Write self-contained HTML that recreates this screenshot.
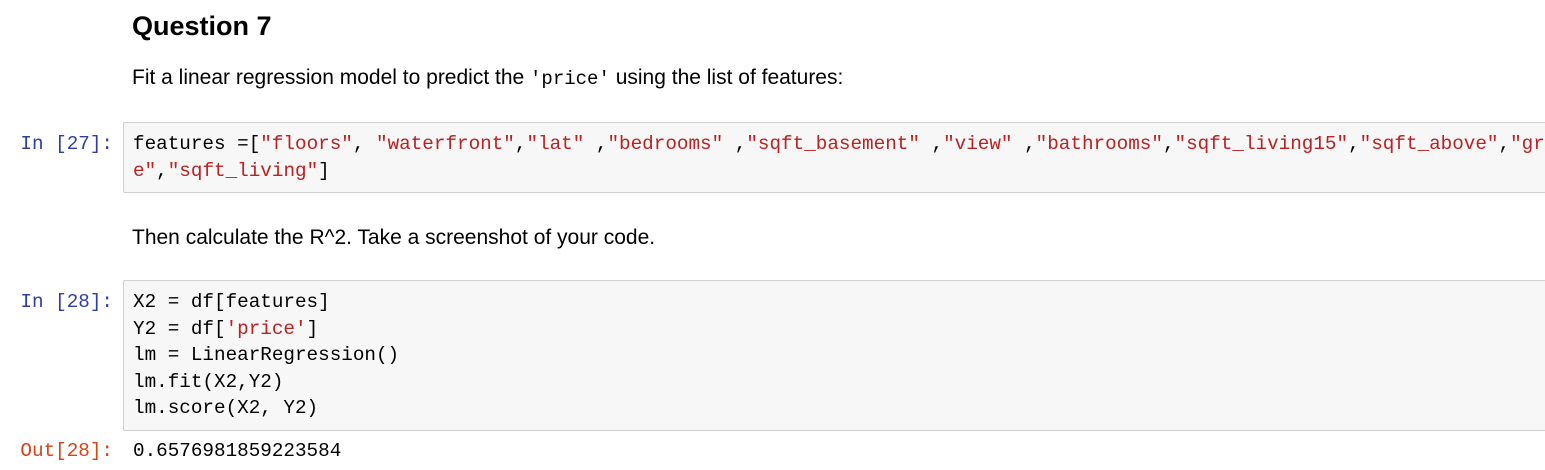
<!DOCTYPE html>
<html><head><style>
body{margin:0;width:1545px;height:470px;background:#fff;overflow:hidden;position:relative;font-family:"Liberation Sans",sans-serif;color:#000}
.abs{position:absolute;white-space:pre}
h2{position:absolute;left:132px;top:11px;margin:0;font-size:27px;font-weight:bold}
.p{position:absolute;left:132px;font-size:21px}
.mono{font-family:"Liberation Mono",monospace;font-size:19.3px;line-height:26.5px}
.box{position:absolute;left:123px;width:1430px;background:#f7f7f7;border:1px solid #cfcfcf;border-radius:2px}
.in{color:#303f9f}
.out{color:#d84315}
.s{color:#ba2121}
code{font-family:"Liberation Mono",monospace}
</style></head><body>
<h2>Question 7</h2>
<div class="p" style="top:66px">Fit a linear regression model to predict the <code style="font-size:19px">'price'</code> using the list of features:</div>
<div class="abs mono in" style="right:1432px;top:131px">In [27]:</div>
<div class="box" style="top:122px;height:69px"></div>
<div class="abs mono" style="left:133px;top:131px">features =[<span class="s">"floors"</span>, <span class="s">"waterfront"</span>,<span class="s">"lat"</span> ,<span class="s">"bedrooms"</span> ,<span class="s">"sqft_basement"</span> ,<span class="s">"view"</span> ,<span class="s">"bathrooms"</span>,<span class="s">"sqft_living15"</span>,<span class="s">"sqft_above"</span>,<span class="s">"grad</span>
<span class="s">e"</span>,<span class="s">"sqft_living"</span>]</div>
<div class="p" style="top:226px">Then calculate the R^2. Take a screenshot of your code.</div>
<div class="abs mono in" style="right:1432px;top:289px">In [28]:</div>
<div class="box" style="top:280px;height:149px"></div>
<div class="abs mono" style="left:133px;top:289px">X2 = df[features]
Y2 = df[<span class="s">'price'</span>]
lm = LinearRegression()
lm.fit(X2,Y2)
lm.score(X2, Y2)</div>
<div class="abs mono out" style="right:1432px;top:438px">Out[28]:</div>
<div class="abs mono" style="left:133px;top:438px">0.6576981859223584</div>
</body></html>
